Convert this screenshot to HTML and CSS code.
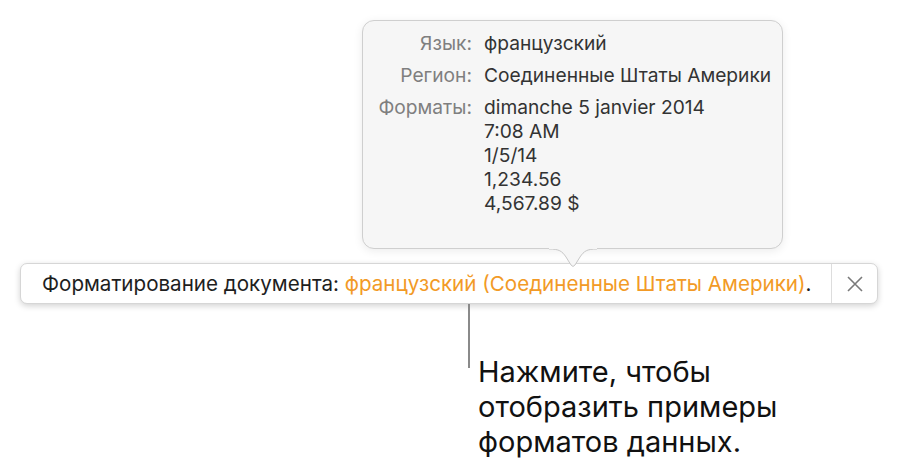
FILE: index.html
```html
<!DOCTYPE html>
<html lang="ru">
<head>
<meta charset="utf-8">
<link rel="stylesheet" href="styles.css">
</head>
<body>
<div class="page">
  <div class="popover">
    <div class="grid">
      <div class="label">Язык:</div>
      <div class="value">французский</div>
      <div class="label">Регион:</div>
      <div class="value">Соединенные Штаты Америки</div>
      <div class="label">Форматы:</div>
      <div class="value">dimanche 5 janvier 2014<br>7:08 AM<br>1/5/14<br>1,234.56<br>4,567.89 $</div>
    </div>
    <svg class="arrow" width="48" height="22" viewBox="0 0 48 22">
      <path d="M0 1 C 10 1, 13 3, 17 9 L 22 17 Q 24 20 26 17 L 31 9 C 35 3, 38 1, 48 1" fill="#f6f6f6" stroke="#c8c8c8" stroke-width="1"/>
      <rect x="0" y="0" width="48" height="1" fill="#f6f6f6"/>
    </svg>
  </div>
  <div class="bar">
    <div class="bar-text">Форматирование документа: <span class="link">французский (Соединенные Штаты Америки)</span>.</div>
    <div class="close">
      <svg width="18" height="18" viewBox="0 0 18 18"><path d="M2 2 L16 16 M16 2 L2 16" stroke="#7a7a7a" stroke-width="1.6" fill="none"/></svg>
    </div>
  </div>
  <div class="callout">
    <div class="line"></div>
    <div class="callout-text">Нажмите, чтобы<br>отобразить примеры<br>форматов данных.</div>
  </div>
</div>
</body>
</html>
```
FILE: styles.css
```css
html, body {
  margin: 0;
  padding: 0;
  background: #ffffff;
}
body {
  font-family: Inter, Roboto, "Liberation Sans", sans-serif;
  width: 897px;
  height: 465px;
  overflow: hidden;
}
.page {
  display: flex;
  flex-direction: column;
  padding-top: 20px;
}
.popover {
  position: relative;
  z-index: 2;
  margin-left: 362px;
  width: 419px;
  height: 227px;
  background: #f6f6f6;
  border: 1px solid #cfcfcf;
  border-radius: 12px;
  box-shadow: 0 2px 10px rgba(0,0,0,0.08);
  box-sizing: content-box;
}
.grid {
  display: grid;
  grid-template-columns: 109px auto;
  column-gap: 12px;
  row-gap: 8px;
  padding-top: 10px;
  font-size: 19.2px;
  line-height: 24px;
}
.label {
  text-align: right;
  color: #7f7f7f;
}
.value {
  color: #333333;
}
.arrow {
  position: absolute;
  left: 186px;
  top: 227px;
}
.bar {
  margin-top: 14px;
  margin-left: 20px;
  width: 858px;
  height: 41px;
  background: #ffffff;
  border: 1px solid #d6d6d6;
  border-radius: 7px;
  box-shadow: 0 2px 6px rgba(0,0,0,0.18);
  display: flex;
  align-items: stretch;
  box-sizing: border-box;
}
.bar-text {
  flex: 1;
  display: flex;
  align-items: center;
  padding-left: 21px;
  font-size: 20.6px;
  color: #1e1e1e;
  white-space: pre;
}
.link {
  color: #f29a26;
}
.close {
  width: 45px;
  border-left: 1px solid #dddddd;
  display: flex;
  align-items: center;
  justify-content: center;
}
.callout {
  display: flex;
  align-items: flex-start;
  margin-left: 468px;
}
.line {
  width: 2px;
  height: 64px;
  background: #8a8a8a;
}
.callout-text {
  margin-top: 50px;
  margin-left: 8px;
  font-size: 29px;
  line-height: 35px;
  color: #111111;
}
```
